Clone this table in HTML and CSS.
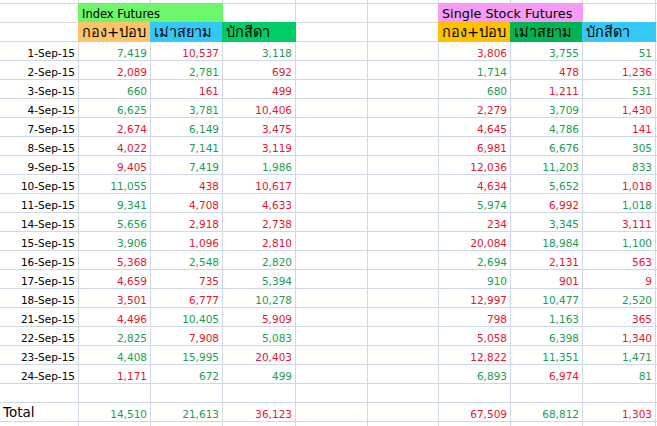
FILE: index.html
```html
<!DOCTYPE html>
<html>
<head>
<meta charset="utf-8">
<link rel="stylesheet" href="styles.css">
</head>
<body>
<div class="sheet">
  <div class="c"></div><div class="c"></div><div class="c"></div><div class="c"></div><div class="c"></div><div class="c"></div><div class="c"></div><div class="c"></div><div class="c"></div><div class="c"></div>

  <div class="c"></div><div class="c title fill-lime span2">Index Futures</div><div class="c"></div><div class="c"></div><div class="c"></div><div class="c title big fill-pink span2">Single Stock Futures</div><div class="c"></div><div class="c"></div>

  <div class="c"></div><div class="c th fill-orange">กอง+ปอบ</div><div class="c th fill-sky">เม่าสยาม</div><div class="c th fill-green">บักสีดา</div><div class="c"></div><div class="c"></div><div class="c th fill-gold">กอง+ปอบ</div><div class="c th fill-emerald">เม่าสยาม</div><div class="c th fill-sky">บักสีดา</div><div class="c"></div>

  <div class="c">1-Sep-15</div><div class="c g">7,419</div><div class="c r">10,537</div><div class="c g">3,118</div><div class="c"></div><div class="c"></div><div class="c r">3,806</div><div class="c g">3,755</div><div class="c g">51</div><div class="c"></div>
  <div class="c">2-Sep-15</div><div class="c r">2,089</div><div class="c g">2,781</div><div class="c r">692</div><div class="c"></div><div class="c"></div><div class="c g">1,714</div><div class="c r">478</div><div class="c r">1,236</div><div class="c"></div>
  <div class="c">3-Sep-15</div><div class="c g">660</div><div class="c r">161</div><div class="c r">499</div><div class="c"></div><div class="c"></div><div class="c g">680</div><div class="c r">1,211</div><div class="c g">531</div><div class="c"></div>
  <div class="c">4-Sep-15</div><div class="c g">6,625</div><div class="c g">3,781</div><div class="c r">10,406</div><div class="c"></div><div class="c"></div><div class="c r">2,279</div><div class="c g">3,709</div><div class="c r">1,430</div><div class="c"></div>
  <div class="c">7-Sep-15</div><div class="c r">2,674</div><div class="c g">6,149</div><div class="c r">3,475</div><div class="c"></div><div class="c"></div><div class="c r">4,645</div><div class="c g">4,786</div><div class="c r">141</div><div class="c"></div>
  <div class="c">8-Sep-15</div><div class="c r">4,022</div><div class="c g">7,141</div><div class="c r">3,119</div><div class="c"></div><div class="c"></div><div class="c r">6,981</div><div class="c g">6,676</div><div class="c g">305</div><div class="c"></div>
  <div class="c">9-Sep-15</div><div class="c r">9,405</div><div class="c g">7,419</div><div class="c g">1,986</div><div class="c"></div><div class="c"></div><div class="c r">12,036</div><div class="c g">11,203</div><div class="c g">833</div><div class="c"></div>
  <div class="c">10-Sep-15</div><div class="c g">11,055</div><div class="c r">438</div><div class="c r">10,617</div><div class="c"></div><div class="c"></div><div class="c r">4,634</div><div class="c g">5,652</div><div class="c r">1,018</div><div class="c"></div>
  <div class="c">11-Sep-15</div><div class="c g">9,341</div><div class="c r">4,708</div><div class="c r">4,633</div><div class="c"></div><div class="c"></div><div class="c g">5,974</div><div class="c r">6,992</div><div class="c g">1,018</div><div class="c"></div>
  <div class="c">14-Sep-15</div><div class="c g">5,656</div><div class="c r">2,918</div><div class="c r">2,738</div><div class="c"></div><div class="c"></div><div class="c r">234</div><div class="c g">3,345</div><div class="c r">3,111</div><div class="c"></div>
  <div class="c">15-Sep-15</div><div class="c g">3,906</div><div class="c r">1,096</div><div class="c r">2,810</div><div class="c"></div><div class="c"></div><div class="c r">20,084</div><div class="c g">18,984</div><div class="c g">1,100</div><div class="c"></div>
  <div class="c">16-Sep-15</div><div class="c r">5,368</div><div class="c g">2,548</div><div class="c g">2,820</div><div class="c"></div><div class="c"></div><div class="c g">2,694</div><div class="c r">2,131</div><div class="c r">563</div><div class="c"></div>
  <div class="c">17-Sep-15</div><div class="c r">4,659</div><div class="c r">735</div><div class="c g">5,394</div><div class="c"></div><div class="c"></div><div class="c g">910</div><div class="c r">901</div><div class="c r">9</div><div class="c"></div>
  <div class="c">18-Sep-15</div><div class="c r">3,501</div><div class="c r">6,777</div><div class="c g">10,278</div><div class="c"></div><div class="c"></div><div class="c r">12,997</div><div class="c g">10,477</div><div class="c g">2,520</div><div class="c"></div>
  <div class="c">21-Sep-15</div><div class="c r">4,496</div><div class="c g">10,405</div><div class="c r">5,909</div><div class="c"></div><div class="c"></div><div class="c r">798</div><div class="c g">1,163</div><div class="c r">365</div><div class="c"></div>
  <div class="c">22-Sep-15</div><div class="c g">2,825</div><div class="c r">7,908</div><div class="c g">5,083</div><div class="c"></div><div class="c"></div><div class="c r">5,058</div><div class="c g">6,398</div><div class="c r">1,340</div><div class="c"></div>
  <div class="c">23-Sep-15</div><div class="c g">4,408</div><div class="c g">15,995</div><div class="c r">20,403</div><div class="c"></div><div class="c"></div><div class="c r">12,822</div><div class="c g">11,351</div><div class="c g">1,471</div><div class="c"></div>
  <div class="c">24-Sep-15</div><div class="c r">1,171</div><div class="c g">672</div><div class="c g">499</div><div class="c"></div><div class="c"></div><div class="c g">6,893</div><div class="c r">6,974</div><div class="c g">81</div><div class="c"></div>

  <div class="c"></div><div class="c"></div><div class="c"></div><div class="c"></div><div class="c"></div><div class="c"></div><div class="c"></div><div class="c"></div><div class="c"></div><div class="c"></div>

  <div class="c total">Total</div><div class="c g">14,510</div><div class="c g">21,613</div><div class="c r">36,123</div><div class="c"></div><div class="c"></div><div class="c r">67,509</div><div class="c g">68,812</div><div class="c r">1,303</div><div class="c"></div>

  <div class="c"></div><div class="c"></div><div class="c"></div><div class="c"></div><div class="c"></div><div class="c"></div><div class="c"></div><div class="c"></div><div class="c"></div><div class="c"></div>
</div>
</body>
</html>
```
FILE: styles.css
```css
html, body {
  margin: 0;
  padding: 0;
  background: #ffffff;
}

.sheet {
  display: grid;
  grid-template-columns: 78px 71px 71px 72px 71px 70px 71px 71px 72px 1fr;
  grid-template-rows: 3px repeat(23, 18px);
  gap: 1px;
  background: #d0d7e5;
  width: 657px;
  height: 426px;
  overflow: hidden;
  font-family: "DejaVu Sans", "Noto Sans", sans-serif;
  font-size: 10.5px;
  color: #000;
}

.c {
  background: #ffffff;
  display: flex;
  align-items: flex-end;
  justify-content: flex-end;
  padding: 0 3px 1px 3px;
  line-height: 12px;
  white-space: nowrap;
  min-width: 0;
}

.g { color: #1a9e50; }
.r { color: #e2162e; }

.span2 { grid-column: span 2; }

.title {
  justify-content: flex-start;
  font-size: 11.5px;
  line-height: 13px;
  padding-bottom: 1px;
}

.title.big {
  font-size: 12.8px;
  line-height: 14px;
}

.th {
  justify-content: flex-start;
  font-size: 14.5px;
  line-height: 16px;
  padding-bottom: 1px;
}

.total {
  justify-content: flex-start;
  font-size: 13.5px;
  line-height: 15px;
  padding-left: 3px;
}

.fill-lime { background: #6cf66c; box-shadow: 0 0 0 1px #6cf66c; }
.fill-pink { background: #f69bf6; box-shadow: 0 0 0 1px #f69bf6; }
.fill-orange { background: #fdc36a; box-shadow: 0 0 0 1px #fdc36a; }
.fill-sky { background: #33c8f8; box-shadow: 0 0 0 1px #33c8f8; }
.fill-green { background: #00cc66; box-shadow: 0 0 0 1px #00cc66; }
.fill-gold { background: #ffc000; box-shadow: 0 0 0 1px #ffc000; }
.fill-emerald { background: #00b454; box-shadow: 0 0 0 1px #00b454; }
```
